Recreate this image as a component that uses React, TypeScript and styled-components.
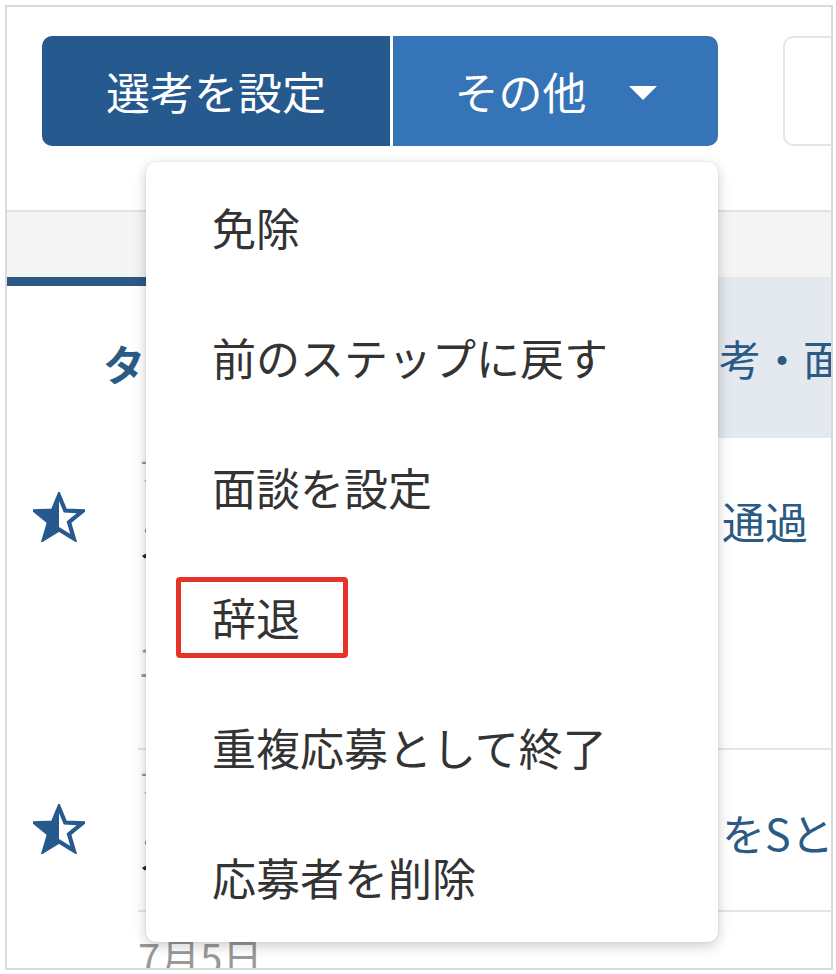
import styled, { createGlobalStyle } from "styled-components";

const GlobalStyle = createGlobalStyle`
  body {
    margin: 0;
    background: #fff;
    font-family: "Noto Sans CJK JP", "Noto Sans", sans-serif;
  }
`;

const menuItems = [
    "免除",
    "前のステップに戻す",
    "面談を設定",
    "辞退",
    "重複応募として終了",
    "応募者を削除"
];

type Candidate = {
    kana?: string;
    name?: string;
    date?: string;
    status?: string;
    starred?: boolean;
};

const candidates: Candidate[] = [
    { kana: "フリガナ", name: "スズキ イチロウ", date: "12月1日", status: "通過", starred: true },
    { kana: "フリガナ", name: "スギヤマ ハナコ", status: "をSとする", starred: true },
    { date: "7月5日" }
];

// half filled star, outline on the right side
const HalfStar = () => (
    <svg width="52" height="50" viewBox="0 0 52 50">
        <polygon
            points="26,1 19.8,18.5 1.3,19 16,30.2 10.7,48 26,37.5"
            fill="currentColor"
        />
        <polygon
            points="26,3.5 32.2,18.5 49.2,19.3 36,30.2 40.8,46.5 26,37.5 11.2,46.5 16,30.2 2.8,19.3 19.8,18.5"
            fill="none"
            stroke="currentColor"
            strokeWidth="4.2"
            strokeLinejoin="miter"
        />
    </svg>
);

function App() {
    return (
        <>
            <GlobalStyle />
            <Frame>
                <Toolbar>
                    <ButtonGroup>
                        <GroupButton $tone="dark">選考を設定</GroupButton>
                        <GroupButton $tone="light">
                            その他
                            <svg width="28" height="14" viewBox="0 0 28 14">
                                <path d="M0 0 L28 0 L14 14 Z" fill="#fff" />
                            </svg>
                        </GroupButton>
                    </ButtonGroup>
                    <GhostButton />
                </Toolbar>

                <TabBand />

                <HeaderRow>
                    <HeaderCell $active>ターゲット</HeaderCell>
                    <HeaderCell>選考・面接</HeaderCell>
                </HeaderRow>

                {candidates.map((c, i) => (
                    <Row key={i}>
                        <StarCell>{c.starred && <HalfStar />}</StarCell>
                        <RowBody>
                            <NameCell>
                                {c.kana && <Kana>{c.kana}</Kana>}
                                {c.name && <Name>{c.name}</Name>}
                                {c.date && <DateLine $lead={!c.name}>{c.date}</DateLine>}
                            </NameCell>
                            {c.status && <StatusCell>{c.status}</StatusCell>}
                        </RowBody>
                    </Row>
                ))}

                <Menu>
                    {menuItems.map((label) => (
                        <MenuItem key={label}>
                            <MenuLabel $marked={label === "辞退"}>{label}</MenuLabel>
                        </MenuItem>
                    ))}
                </Menu>
            </Frame>
        </>
    );
}

const Frame = styled.div`
  position: relative;
  margin: 5px;
  width: 828px;
  height: 965px;
  box-sizing: border-box;
  border: 2px solid #dadada;
  overflow: hidden;
  background: #fff;
`;

const Toolbar = styled.div`
  display: flex;
  align-items: flex-start;
  gap: 65px;
  height: 203px;
  box-sizing: border-box;
  padding: 29px 0 0 35px;
`;

const ButtonGroup = styled.div`
  display: flex;
  gap: 3px;
  border-radius: 10px;
  overflow: hidden;
  flex-shrink: 0;
`;

const GroupButton = styled.button<{ $tone: "dark" | "light" }>`
  display: flex;
  align-items: center;
  justify-content: center;
  gap: 42px;
  width: ${(p) => (p.$tone === "dark" ? "348px" : "325px")};
  height: 110px;
  border: none;
  padding: 0;
  background: ${(p) => (p.$tone === "dark" ? "#26598e" : "#3674b8")};
  color: #fff;
  font-family: inherit;
  font-size: 44px;
  cursor: pointer;

  svg {
    margin-top: 4px;
  }
`;

const GhostButton = styled.button`
  flex-shrink: 0;
  width: 120px;
  height: 110px;
  border: 2px solid #dfe8f0;
  border-radius: 10px;
  background: #fff;
`;

const TabBand = styled.div`
  height: 65px;
  border-top: 2px solid #e2e2e2;
  background: #f4f4f4;
`;

const HeaderRow = styled.div`
  display: flex;
  height: 161px;
`;

const HeaderCell = styled.div<{ $active?: boolean }>`
  display: flex;
  align-items: center;
  box-sizing: border-box;
  color: #2b5a85;
  font-size: 42px;
  white-space: nowrap;
  ${(p) =>
        p.$active
            ? `
    flex: 0 0 373px;
    padding-left: 96px;
    border-top: 9px solid #2b5a85;
    background: #fff;
    font-weight: bold;
  `
            : `
    flex: 1;
    padding-left: 297px;
    background: #e3e9ee;
  `}
`;

const Row = styled.div`
  display: flex;
`;

const StarCell = styled.div`
  flex: 0 0 131px;
  box-sizing: border-box;
  padding: 54px 0 0 26px;
  color: #26598e;
  line-height: 0;
`;

const RowBody = styled.div`
  flex: 1;
  display: flex;
  padding: 12px 0 30px;
  border-bottom: 2px solid #e6e6e6;
`;

const NameCell = styled.div`
  flex: 0 0 539px;
  display: flex;
  flex-direction: column;
`;

const Kana = styled.div`
  height: 40px;
  line-height: 40px;
  font-size: 28px;
  color: #999;
`;

const Name = styled.div`
  margin-top: 22px;
  height: 56px;
  line-height: 56px;
  font-size: 40px;
  color: #222;
`;

const DateLine = styled.div<{ $lead?: boolean }>`
  margin: ${(p) => (p.$lead ? "7px 0 0" : "67px 0 33px")};
  height: 50px;
  line-height: 50px;
  font-size: 40px;
  color: #999;
`;

const StatusCell = styled.div`
  margin-top: 42px;
  padding-left: 45px;
  line-height: 56px;
  font-size: 43px;
  color: #2b5a85;
  white-space: nowrap;
`;

const Menu = styled.ul`
  position: absolute;
  left: 139px;
  top: 155px;
  width: 572px;
  margin: 0;
  padding: 0;
  list-style: none;
  background: #fff;
  border-radius: 10px;
  box-shadow: 0 4px 14px rgba(0, 0, 0, 0.2), 0 0 3px rgba(0, 0, 0, 0.08);
`;

const MenuItem = styled.li`
  display: flex;
  align-items: center;
  height: 130px;
  padding-left: 66px;
  font-size: 44px;
  color: #333;
  cursor: pointer;
`;

const MenuLabel = styled.span<{ $marked?: boolean }>`
  position: relative;
  line-height: 1;

  ${(p) =>
        p.$marked &&
        `
    &::after {
      content: "";
      position: absolute;
      inset: -18px -48px -19px -36px;
      border: 5px solid #e6332a;
      border-radius: 4px;
    }
  `}
`;

export default App;
